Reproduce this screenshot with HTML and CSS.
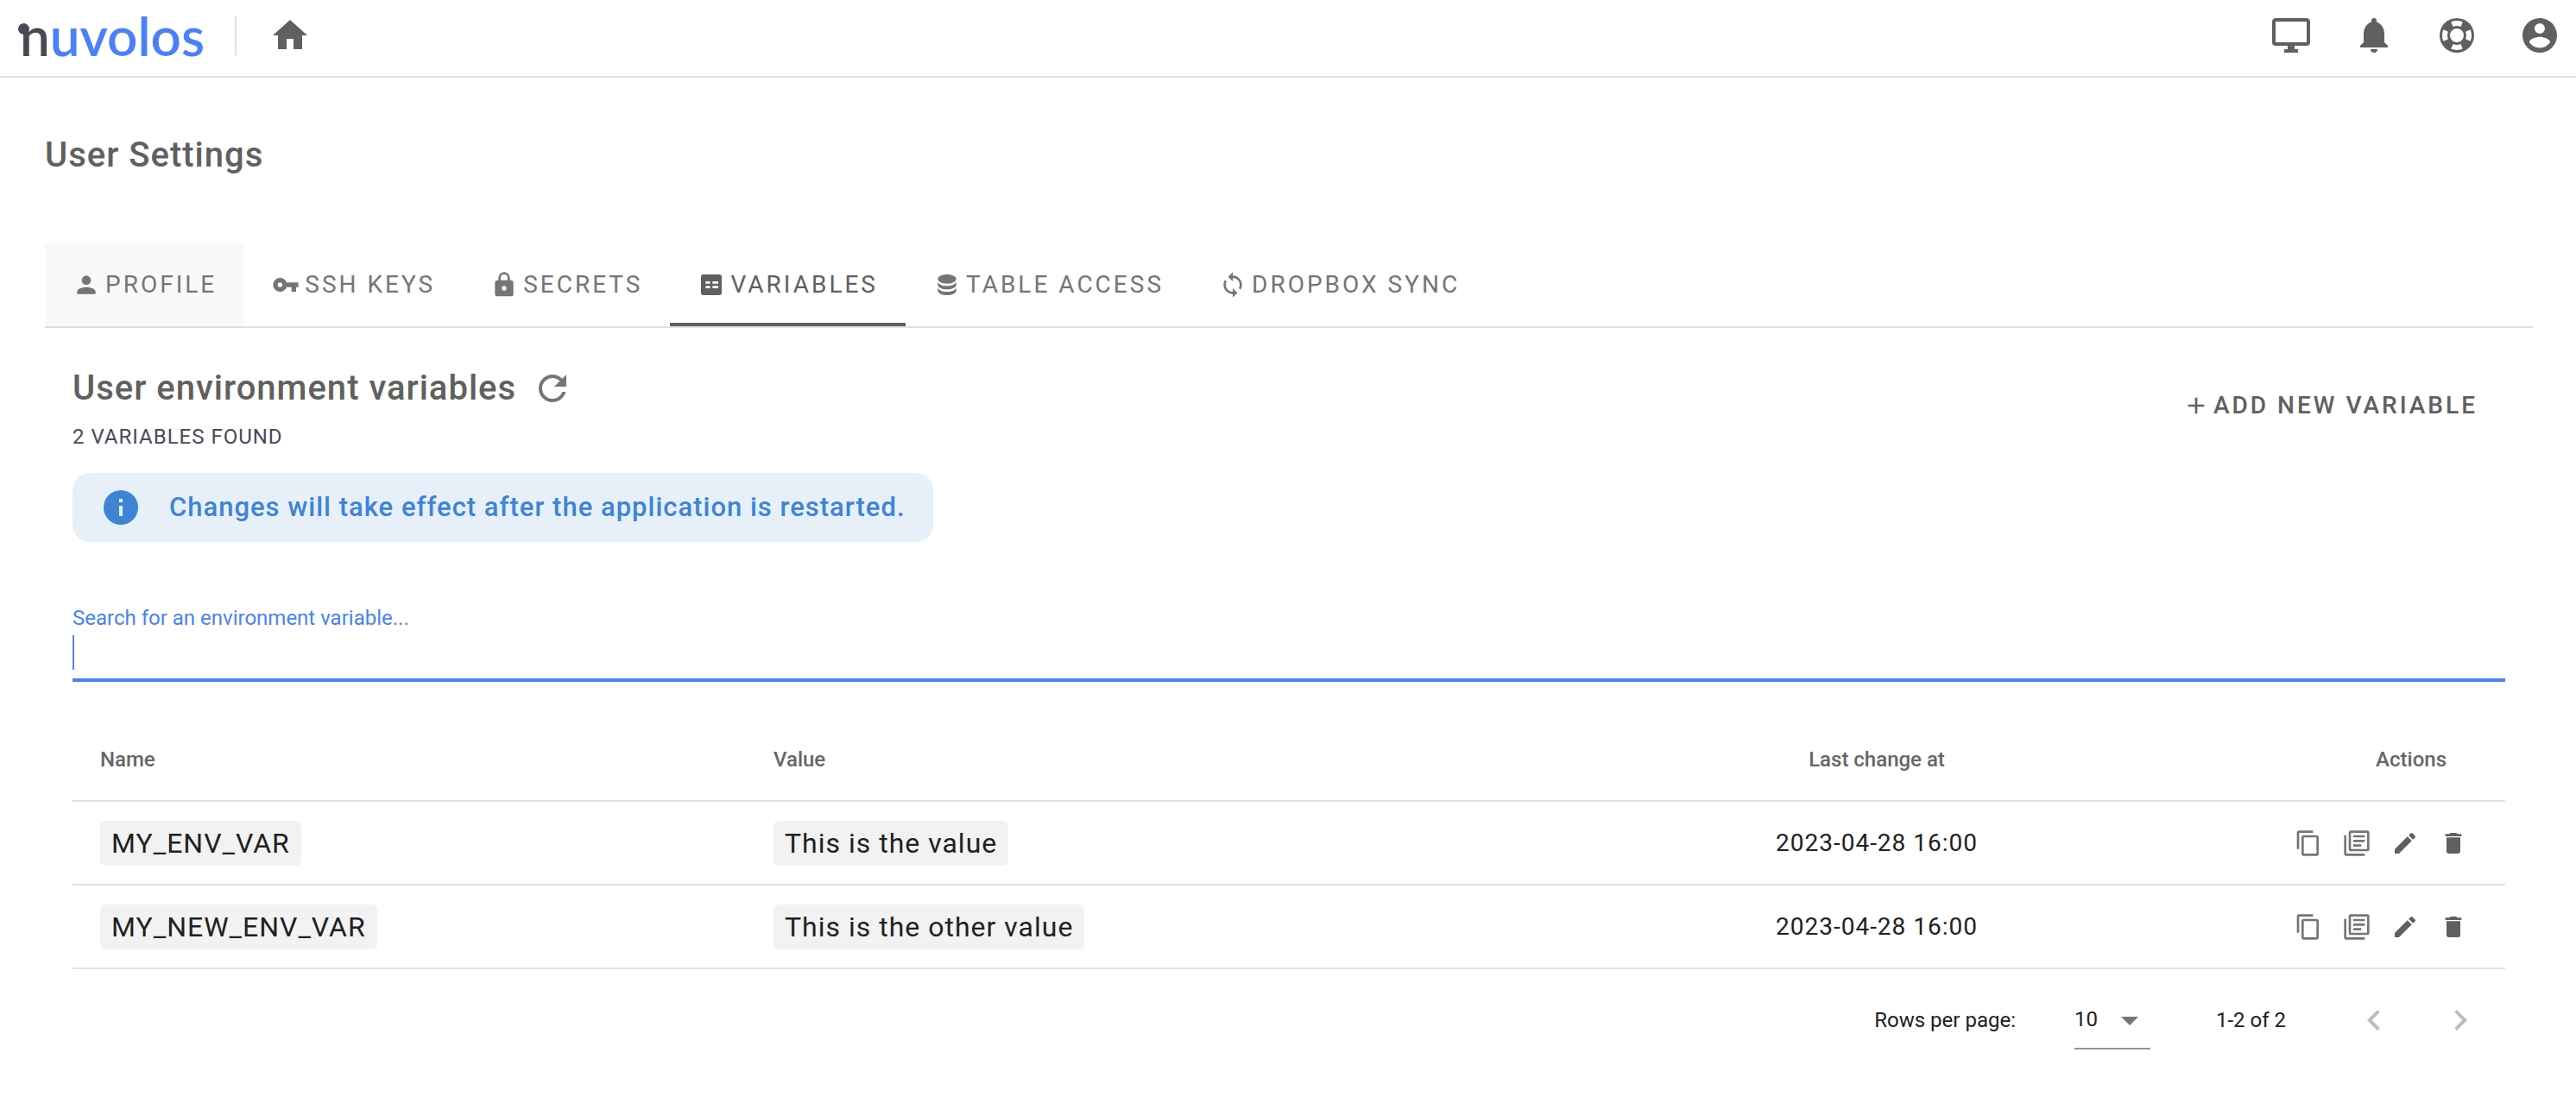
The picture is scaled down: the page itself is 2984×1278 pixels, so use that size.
FILE: index.html
```html
<!DOCTYPE html>
<html lang="en">
<head>
<meta charset="utf-8">
<title>User Settings</title>
<meta name="viewport" content="width=device-width, initial-scale=1">
<link rel="stylesheet" href="styles.css">
</head>
<body>
<svg class="sprite" aria-hidden="true">
  <symbol id="home" viewBox="0 0 24 24"><path d="M10,20V14H14V20H19V12H22L12,3L2,12H5V20H10Z"/></symbol>
  <symbol id="monitor" viewBox="0 0 24 24"><path d="M21,16H3V4H21M21,2H3C1.89,2 1,2.89 1,4V16A2,2 0 0,0 3,18H10V20H8V22H16V20H14V18H21A2,2 0 0,0 23,16V4C23,2.89 22.1,2 21,2Z"/></symbol>
  <symbol id="bell" viewBox="0 0 24 24"><path d="M20,18V19H4V18L6,16V11C6,7.9 7.8,5.17 10.5,4.29V3.5A1.5,1.5 0 0,1 12,2A1.5,1.5 0 0,1 13.5,3.5V4.29C16.2,5.17 18,7.9 18,11V16L20,18M14,20A2,2 0 0,1 12,22A2,2 0 0,1 10,20"/></symbol>
  <symbol id="lifebuoy" viewBox="0 0 24 24"><path d="M19.79,15.41C20.74,13.24 20.74,10.75 19.79,8.59L17.05,9.83C17.65,11.21 17.65,12.78 17.06,14.17L19.79,15.41M15.42,4.21C13.25,3.26 10.76,3.26 8.59,4.21L9.83,6.94C11.22,6.35 12.79,6.35 14.18,6.95L15.42,4.21M4.21,8.58C3.26,10.76 3.26,13.24 4.21,15.42L6.95,14.17C6.35,12.79 6.35,11.21 6.95,9.82L4.21,8.58M8.59,19.79C10.76,20.74 13.25,20.74 15.42,19.78L14.18,17.05C12.8,17.65 11.22,17.65 9.84,17.06L8.59,19.79M12,2A10,10 0 0,1 22,12A10,10 0 0,1 12,22A10,10 0 0,1 2,12A10,10 0 0,1 12,2M12,8A4,4 0 0,0 8,12A4,4 0 0,0 12,16A4,4 0 0,0 16,12A4,4 0 0,0 12,8Z"/></symbol>
  <symbol id="account-circle" viewBox="0 0 24 24"><path d="M12,19.2C9.5,19.2 7.29,17.92 6,16C6.03,14 10,12.9 12,12.9C14,12.9 17.97,14 18,16C16.71,17.92 14.5,19.2 12,19.2M12,5A3,3 0 0,1 15,8A3,3 0 0,1 12,11A3,3 0 0,1 9,8A3,3 0 0,1 12,5M12,2A10,10 0 0,0 2,12A10,10 0 0,0 12,22A10,10 0 0,0 22,12C22,6.47 17.5,2 12,2Z"/></symbol>
  <symbol id="account" viewBox="0 0 24 24"><path d="M12,4A4,4 0 0,1 16,8A4,4 0 0,1 12,12A4,4 0 0,1 8,8A4,4 0 0,1 12,4M12,14C16.42,14 20,15.79 20,18V20H4V18C4,15.79 7.58,14 12,14Z"/></symbol>
  <symbol id="key" viewBox="0 0 24 24"><path d="M7,14A2,2 0 0,1 5,12A2,2 0 0,1 7,10A2,2 0 0,1 9,12A2,2 0 0,1 7,14M12.65,10C11.83,7.67 9.61,6 7,6A6,6 0 0,0 1,12A6,6 0 0,0 7,18C9.61,18 11.83,16.33 12.65,14H17V18H21V14H23V10H12.65Z"/></symbol>
  <symbol id="lock" viewBox="0 0 24 24"><path d="M12,17A2,2 0 0,0 14,15C14,13.89 13.1,13 12,13A2,2 0 0,0 10,15A2,2 0 0,0 12,17M18,8A2,2 0 0,1 20,10V20A2,2 0 0,1 18,22H6A2,2 0 0,1 4,20V10C4,8.89 4.9,8 6,8H7V6A5,5 0 0,1 12,1A5,5 0 0,1 17,6V8H18M12,3A3,3 0 0,0 9,6V8H15V6A3,3 0 0,0 12,3Z"/></symbol>
  <symbol id="variables" viewBox="0 0 24 24"><path fill-rule="evenodd" d="M5,3H19A2,2 0 0,1 21,5V19A2,2 0 0,1 19,21H5A2,2 0 0,1 3,19V5A2,2 0 0,1 5,3M7,9V11H11V9H7M13,9V11H18V9H13M7,13V15H11V13H7M13,13V15H18V13H13Z"/></symbol>
  <symbol id="database" viewBox="0 0 24 24"><path d="M12,3C7.58,3 4,4.79 4,7C4,9.21 7.58,11 12,11C16.42,11 20,9.21 20,7C20,4.79 16.42,3 12,3M4,9V12C4,14.21 7.58,16 12,16C16.42,16 20,14.21 20,12V9C20,11.21 16.42,13 12,13C7.58,13 4,11.21 4,9M4,14V17C4,19.21 7.58,21 12,21C16.42,21 20,19.21 20,17V14C20,16.21 16.42,18 12,18C7.58,18 4,16.21 4,14Z"/></symbol>
  <symbol id="sync" viewBox="0 0 24 24"><path d="M12,18A6,6 0 0,1 6,12C6,11 6.25,10.03 6.7,9.2L5.24,7.74C4.46,8.97 4,10.43 4,12A8,8 0 0,0 12,20V23L16,19L12,15M12,4V1L8,5L12,9V6A6,6 0 0,1 18,12C18,13 17.75,13.97 17.3,14.8L18.76,16.26C19.54,15.03 20,13.57 20,12A8,8 0 0,0 12,4Z"/></symbol>
  <symbol id="refresh" viewBox="0 0 24 24"><path d="M17.65,6.35C16.2,4.9 14.21,4 12,4A8,8 0 0,0 4,12A8,8 0 0,0 12,20C15.73,20 18.84,17.45 19.73,14H17.65C16.83,16.33 14.61,18 12,18A6,6 0 0,1 6,12A6,6 0 0,1 12,6C13.66,6 15.14,6.69 16.22,7.78L13,11H20V4L17.65,6.35Z"/></symbol>
  <symbol id="plus" viewBox="0 0 24 24"><path d="M19,13H13V19H11V13H5V11H11V5H13V11H19V13Z"/></symbol>
  <symbol id="information" viewBox="0 0 24 24"><path d="M13,9H11V7H13M13,17H11V11H13M12,2A10,10 0 0,0 2,12A10,10 0 0,0 12,22A10,10 0 0,0 22,12A10,10 0 0,0 12,2Z"/></symbol>
  <symbol id="copy" viewBox="0 0 24 24"><path d="M19,21H8V7H19M19,5H8A2,2 0 0,0 6,7V21A2,2 0 0,0 8,23H19A2,2 0 0,0 21,21V7A2,2 0 0,0 19,5M16,1H4A2,2 0 0,0 2,3V17H4V3H16V1Z"/></symbol>
  <symbol id="copy-text" viewBox="0 0 24 24"><path d="M21,3V17H7V3H21M21,1H7A2,2 0 0,0 5,3V17A2,2 0 0,0 7,19H21A2,2 0 0,0 23,17V3A2,2 0 0,0 21,1M3,5H1V21A2,2 0 0,0 3,23H19V21H3V5M9,5H19V7H9V5M9,9H19V11H9V9M9,13H16V15H9V13Z"/></symbol>
  <symbol id="pencil" viewBox="0 0 24 24"><path d="M20.71,7.04C21.1,6.65 21.1,6 20.71,5.63L18.37,3.29C18,2.9 17.35,2.9 16.96,3.29L15.12,5.12L18.87,8.87M3,17.25V21H6.75L17.81,9.93L14.06,6.18L3,17.25Z"/></symbol>
  <symbol id="delete" viewBox="0 0 24 24"><path d="M19,4H15.5L14.5,3H9.5L8.5,4H5V6H19M6,19A2,2 0 0,0 8,21H16A2,2 0 0,0 18,19V7H6V19Z"/></symbol>
  <symbol id="menu-down" viewBox="0 0 24 24"><path d="M7,10L12,15L17,10H7Z"/></symbol>
  <symbol id="chevron-left" viewBox="0 0 24 24"><path d="M15.41,16.58L10.83,12L15.41,7.41L14,6L8,12L14,18L15.41,16.58Z"/></symbol>
  <symbol id="chevron-right" viewBox="0 0 24 24"><path d="M8.59,16.58L13.17,12L8.59,7.41L10,6L16,12L10,18L8.59,16.58Z"/></symbol>
</svg>

<header class="app-bar">
  <a class="logo" href="#" aria-label="nuvolos"><span class="logo-n">n</span>uvolos</a>
  <span class="app-bar-divider"></span>
  <a class="icon-link" href="#" aria-label="Home"><svg class="icon"><use href="#home"/></svg></a>
  <nav class="app-bar-actions" aria-label="Account">
    <button class="icon-btn" aria-label="Applications"><svg class="icon"><use href="#monitor"/></svg></button>
    <button class="icon-btn" aria-label="Notifications"><svg class="icon"><use href="#bell"/></svg></button>
    <button class="icon-btn" aria-label="Help"><svg class="icon"><use href="#lifebuoy"/></svg></button>
    <button class="icon-btn" aria-label="Account"><svg class="icon"><use href="#account-circle"/></svg></button>
  </nav>
</header>

<main class="page">
  <h1 class="page-title">User Settings</h1>

  <nav class="tabs" aria-label="Settings sections">
    <a class="tab tab-hover" href="#"><svg class="icon icon-small"><use href="#account"/></svg>PROFILE</a>
    <a class="tab" href="#"><svg class="icon icon-small"><use href="#key"/></svg>SSH KEYS</a>
    <a class="tab" href="#"><svg class="icon icon-small"><use href="#lock"/></svg>SECRETS</a>
    <a class="tab tab-active" href="#" aria-current="page"><svg class="icon icon-small"><use href="#variables"/></svg>VARIABLES</a>
    <a class="tab" href="#"><svg class="icon icon-small"><use href="#database"/></svg>TABLE ACCESS</a>
    <a class="tab" href="#"><svg class="icon icon-small"><use href="#sync"/></svg>DROPBOX SYNC</a>
  </nav>

  <section class="panel">
    <div class="panel-head">
      <div>
        <div class="panel-title-row">
          <h2 class="panel-title">User environment variables</h2>
          <button class="icon-btn icon-muted" aria-label="Refresh"><svg class="icon"><use href="#refresh"/></svg></button>
        </div>
        <p class="panel-count">2 VARIABLES FOUND</p>
      </div>
      <button class="add-btn"><svg class="icon icon-small"><use href="#plus"/></svg>ADD NEW VARIABLE</button>
    </div>

    <div class="alert" role="status">
      <svg class="icon"><use href="#information"/></svg>
      <span>Changes will take effect after the application is restarted.</span>
    </div>

    <div class="search">
      <label class="search-label" for="search">Search for an environment variable...</label>
      <input class="search-input" id="search" type="text">
    </div>

    <table class="vars">
      <colgroup><col class="col-name"><col class="col-value"><col class="col-date"><col class="col-actions"></colgroup>
      <thead>
        <tr><th>Name</th><th>Value</th><th class="center">Last change at</th><th class="actions-head">Actions</th></tr>
      </thead>
      <tbody>
        <tr>
          <td><span class="chip">MY_ENV_VAR</span></td>
          <td><span class="chip">This is the value</span></td>
          <td class="center">2023-04-28 16:00</td>
          <td><div class="row-actions">
            <button class="icon-btn icon-muted" aria-label="Copy name"><svg class="icon icon-small"><use href="#copy"/></svg></button>
            <button class="icon-btn icon-muted" aria-label="Copy value"><svg class="icon icon-small"><use href="#copy-text"/></svg></button>
            <button class="icon-btn" aria-label="Edit"><svg class="icon icon-small"><use href="#pencil"/></svg></button>
            <button class="icon-btn" aria-label="Delete"><svg class="icon icon-small"><use href="#delete"/></svg></button>
          </div></td>
        </tr>
        <tr>
          <td><span class="chip">MY_NEW_ENV_VAR</span></td>
          <td><span class="chip">This is the other value</span></td>
          <td class="center">2023-04-28 16:00</td>
          <td><div class="row-actions">
            <button class="icon-btn icon-muted" aria-label="Copy name"><svg class="icon icon-small"><use href="#copy"/></svg></button>
            <button class="icon-btn icon-muted" aria-label="Copy value"><svg class="icon icon-small"><use href="#copy-text"/></svg></button>
            <button class="icon-btn" aria-label="Edit"><svg class="icon icon-small"><use href="#pencil"/></svg></button>
            <button class="icon-btn" aria-label="Delete"><svg class="icon icon-small"><use href="#delete"/></svg></button>
          </div></td>
        </tr>
      </tbody>
    </table>

    <div class="pager">
      <label for="rows">Rows per page:</label>
      <div class="select">
        <select id="rows"><option>10</option><option>25</option><option>50</option></select>
        <svg class="icon select-arrow"><use href="#menu-down"/></svg>
      </div>
      <span class="pager-range">1-2 of 2</span>
      <div class="pager-nav">
        <button class="icon-btn" disabled aria-label="Previous page"><svg class="icon"><use href="#chevron-left"/></svg></button>
        <button class="icon-btn" disabled aria-label="Next page"><svg class="icon"><use href="#chevron-right"/></svg></button>
      </div>
    </div>
  </section>
</main>
</body>
</html>
```
FILE: styles.css
```css
* {
  box-sizing: border-box;
}

body {
  margin: 0;
  background: #fff;
  color: #212121;
  font-family: Roboto, "Liberation Sans", sans-serif;
  font-size: 28px;
  line-height: 40px;
}

.sprite {
  display: none;
}

h1, h2, p {
  margin: 0;
}

button, input, select {
  font: inherit;
  color: inherit;
}

a {
  color: inherit;
  text-decoration: none;
}

.icon {
  display: block;
  flex: none;
  width: 48px;
  height: 48px;
  fill: currentColor;
}

.icon-small {
  width: 32px;
  height: 32px;
}

.icon-btn {
  display: block;
  padding: 0;
  border: 0;
  background: none;
  color: #606060;
  cursor: pointer;
}

.icon-muted {
  color: #757575;
}

.icon-btn:disabled {
  color: #bdbdbd;
  cursor: default;
}

/* Top bar */

.app-bar {
  display: flex;
  align-items: center;
  height: 90px;
  padding: 0 18px 6px 21px;
  border-bottom: 2px solid #e0e0e0;
  color: #606060;
}

.logo {
  position: relative;
  width: 220px;
  padding-left: 2px;
  color: #4b81f8;
  font-family: Lato, sans-serif;
  font-size: 62px;
  font-weight: 600;
  line-height: 68px;
}

.logo-n {
  color: #454a55;
}

.logo::before {
  content: "";
  position: absolute;
  left: 0;
  top: 20px;
  width: 13px;
  height: 13px;
  border-radius: 50%;
  background: #454a55;
}

.app-bar-divider {
  width: 2px;
  height: 46px;
  margin: 0 38px 0 31px;
  background: #e0e0e0;
}

.app-bar-actions {
  display: flex;
  gap: 48px;
  margin-left: auto;
}

/* Page and tabs */

.page {
  padding: 66px 50px 40px 52px;
}

.page-title {
  color: #606060;
  font-size: 40px;
  font-weight: 500;
  line-height: 48px;
  letter-spacing: 1px;
}

.tabs {
  display: flex;
  margin-top: 78px;
  border-bottom: 2px solid #e0e0e0;
}

.tab {
  display: flex;
  align-items: center;
  gap: 6px;
  height: 96px;
  padding: 0 32px;
  color: #757575;
  letter-spacing: 3px;
}

.tab-hover {
  background: #f9f9f9;
}

.tab-active {
  color: #606060;
  box-shadow: inset 0 -4px #606060;
}

/* Variables panel */

.panel {
  padding: 46px 32px 0;
}

.panel-head {
  display: flex;
  justify-content: space-between;
}

.panel-title-row {
  display: flex;
  align-items: center;
  gap: 18px;
}

.panel-title {
  color: #606060;
  font-size: 40px;
  font-weight: 500;
  line-height: 48px;
  letter-spacing: 1px;
}

.panel-count {
  margin-top: 12px;
  color: #454a5a;
  font-size: 24px;
  letter-spacing: 1px;
}

.add-btn {
  display: flex;
  align-items: center;
  gap: 4px;
  align-self: flex-start;
  height: 72px;
  margin-top: 8px;
  padding: 0 32px;
  border: 0;
  background: none;
  color: #606060;
  font-weight: 500;
  letter-spacing: 3px;
  cursor: pointer;
}

.alert {
  display: flex;
  align-items: center;
  gap: 32px;
  width: fit-content;
  margin-top: 22px;
  padding: 16px 32px;
  border-radius: 20px;
  background: #e7eff9;
  color: #3d84d6;
  font-size: 31px;
  font-weight: 500;
  line-height: 48px;
  letter-spacing: 1px;
}

.search {
  margin-top: 68px;
}

.search-label {
  display: block;
  color: #4b81f8;
  font-size: 24px;
}

.search-input {
  display: block;
  width: 100%;
  height: 54px;
  padding: 0;
  border: 0;
  border-bottom: 4px solid #4b81f8;
  outline: 0;
  background: linear-gradient(#4b81f8, #4b81f8) 0 0 / 2px 40px no-repeat;
  caret-color: #4b81f8;
}

.vars {
  width: 100%;
  margin-top: 42px;
  border-collapse: separate;
  border-spacing: 0;
  table-layout: fixed;
}

.col-name {
  width: 780px;
}

.col-date {
  width: 360px;
}

.col-actions {
  width: 548px;
}

.vars th, .vars td {
  height: 97px;
  padding: 0 32px;
  border-bottom: 2px solid #e0e0e0;
  text-align: left;
}

.vars th {
  color: #666;
  font-size: 24px;
  font-weight: 500;
}

.vars .center {
  text-align: center;
}

.vars td.center {
  letter-spacing: 1px;
}

.vars .actions-head {
  padding-right: 68px;
  text-align: right;
}

.chip {
  display: inline-block;
  padding: 6px 13px;
  border-radius: 6px;
  background: #f2f2f2;
  font-size: 32px;
  letter-spacing: 1px;
  vertical-align: middle;
}

.row-actions {
  display: flex;
  justify-content: flex-end;
  gap: 24px;
  padding-right: 12px;
}

/* Pagination */

.pager {
  display: flex;
  align-items: center;
  justify-content: flex-end;
  height: 118px;
  padding-right: 28px;
  font-size: 24px;
}

.select {
  position: relative;
  width: 88px;
  height: 68px;
  margin: 0 76px 0 68px;
  border-bottom: 2px solid #949494;
}

.select select {
  width: 100%;
  height: 100%;
  padding: 0;
  border: 0;
  outline: 0;
  background: none;
  appearance: none;
}

.select-arrow {
  position: absolute;
  top: 10px;
  right: 0;
  color: #757575;
  pointer-events: none;
}

.pager-nav {
  display: flex;
  gap: 52px;
  margin-left: 78px;
}
```
